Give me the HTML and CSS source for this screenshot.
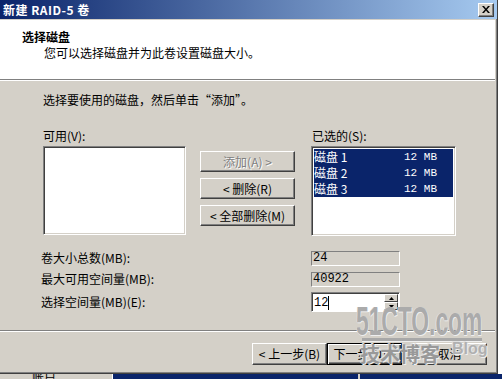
FILE: index.html
```html
<!DOCTYPE html>
<html lang="zh">
<head>
<meta charset="utf-8">
<link rel="stylesheet" href="styles.css">
</head>
<body>
<div class="screen">
  <div class="window">
    <div class="titlebar">
      <span class="title">新建 RAID-5 卷</span>
      <span class="close"><svg width="8" height="7" viewBox="0 0 8 7"><path d="M0 0h2l2 2.5L6 0h2L5 3.5 8 7H6L4 4.5 2 7H0l3-3.5z" fill="#000"/></svg></span>
    </div>
    <div class="header">
      <div class="h-title">选择磁盘</div>
      <div class="h-sub">您可以选择磁盘并为此卷设置磁盘大小。</div>
    </div>
    <div class="content">
      <div class="instr">选择要使用的磁盘，然后单击“添加”。</div>
      <div class="lists">
        <div class="col-left">
          <div class="label">可用(V):</div>
          <div class="listbox lb-left"></div>
        </div>
        <div class="col-mid">
          <div class="btn disabled">添加(A) &gt;</div>
          <div class="btn">&lt; 删除(R)</div>
          <div class="btn">&lt; 全部删除(M)</div>
        </div>
        <div class="col-right">
          <div class="label">已选的(S):</div>
          <div class="listbox lb-right">
            <div class="row"><span class="name">磁盘 1</span><span class="size">12 MB</span></div>
            <div class="row"><span class="name">磁盘 2</span><span class="size">12 MB</span></div>
            <div class="row"><span class="name">磁盘 3</span><span class="size">12 MB</span></div>
          </div>
        </div>
      </div>
      <div class="fields">
        <div class="frow"><span class="flabel">卷大小总数(MB):</span><span class="field ro">24</span></div>
        <div class="frow"><span class="flabel">最大可用空间量(MB):</span><span class="field ro">40922</span></div>
        <div class="frow"><span class="flabel">选择空间量(MB)(E):</span>
          <span class="spin"><span class="spin-val">12<span class="caret"></span></span>
            <span class="spin-btns"><span class="sb"><svg width="5" height="3" viewBox="0 0 5 3"><path d="M2.5 0L5 3H0z" fill="#000"/></svg></span><span class="sb"><svg width="5" height="3" viewBox="0 0 5 3"><path d="M0 0h5L2.5 3z" fill="#000"/></svg></span></span>
          </span>
        </div>
      </div>
    </div>
    <div class="footer">
      <div class="btn fb">&lt; 上一步(B)</div>
      <div class="btn fb default">下一步(N) &gt;</div>
      <div class="btn fb cancel">取消</div>
    </div>
    <div class="watermark">
      <div class="wm-big">51CTO.com</div>
      <div class="wm-line"></div>
      <div class="wm-small">技术博客<span class="wm-blog">Blog</span></div>
    </div>
  </div>
  <div class="taskbar">
    <div class="tb-left">账户</div>
    <div class="tb-right"><span class="tb-sep"></span></div>
  </div>
</div>
</body>
</html>
```
FILE: styles.css
```css
* { box-sizing: border-box; }
html, body { margin: 0; padding: 0; }
body {
  width: 502px; height: 379px; overflow: hidden;
  background: #ffffff;
  font-family: "Noto Sans CJK SC", "DejaVu Sans", sans-serif;
  font-size: 12px; color: #000;
}
.screen { position: relative; width: 502px; height: 379px; }
.window {
  position: relative;
  width: 498px; height: 374px;
  background: #d4d0c8;
  border-right: 1px solid #404040;
  border-bottom: 1px solid #404040;
  box-shadow: inset -1px -1px 0 #808080;
  display: flex; flex-direction: column;
}
.titlebar {
  height: 19px; flex: none;
  background: linear-gradient(to right, #0a246a, #a6caf0);
  display: flex; align-items: center; justify-content: space-between;
  padding: 0 3px 0 3px;
}
.title { color: #fff; font-weight: bold; font-size: 12px; line-height: 19px; letter-spacing: 0.5px; }
.close {
  width: 16px; height: 14px; background: #d4d0c8;
  border: 1px solid; border-color: #fff #404040 #404040 #fff;
  box-shadow: inset -1px -1px 0 #808080;
  display: flex; align-items: center; justify-content: center;
}
.header {
  height: 61px; flex: none; background: #fff;
  border-top: 1px solid #d4d0c8;
  border-bottom: 1px solid #808080;
  box-shadow: 0 1px 0 #fff;
  padding: 9px 0 0 22px;
  margin-right: 2px;
}
.h-title { font-weight: bold; line-height: 16px; }
.h-sub { line-height: 16px; padding-left: 22px; }
.content { padding: 11px 0 0 43px; height: 249px; flex: none; margin-top: 1px; margin-right: 2px; }
.instr { line-height: 16px; }
.lists { display: flex; margin-top: 20px; }
.label { line-height: 16px; height: 16px; margin-bottom: 2px; }
.listbox {
  background: #fff;
  border: 1px solid; border-color: #808080 #fff #fff #808080;
  box-shadow: inset 1px 1px 0 #404040, inset -1px -1px 0 #d4d0c8;
}
.lb-left { width: 143px; height: 89px; }
.col-mid { display: flex; flex-direction: column; gap: 6px; padding-top: 23px; margin-left: 14px; }
.btn {
  width: 95px; height: 21px;
  background: #d4d0c8;
  border: 1px solid; border-color: #fff #404040 #404040 #fff;
  box-shadow: inset -1px -1px 0 #808080;
  display: flex; align-items: center; justify-content: center;
  line-height: 16px; white-space: nowrap;
}
.btn.disabled { color: #808080; text-shadow: 1px 1px 0 #fff; }
.col-right { margin-left: 16px; }
.col-right .label { padding-left: 1px; }
.lb-right { width: 145px; height: 90px; padding: 2px 2px; }
.row { display: flex; height: 16px; line-height: 16px; background: #0a246a; color: #fff; }
.row .name { width: 90px; }
.row .size { font-family: "Liberation Mono", monospace; font-size: 11px; }
.fields { margin-top: 14px; margin-left: -2px; display: flex; flex-direction: column; gap: 5px; }
.frow { display: flex; align-items: center; height: 16px; }
.frow:last-child { height: 20px; }
.flabel { width: 270px; line-height: 16px; }
.field.ro {
  width: 89px; height: 15px; line-height: 13px;
  border: 1px solid; border-color: #808080 #fff #fff #808080;
  padding-left: 1px; font-family: "Liberation Mono", monospace; font-size: 12px;
}
.spin {
  width: 89px; height: 20px; display: flex; background: #fff;
  border: 1px solid; border-color: #808080 #fff #fff #808080;
  box-shadow: inset 1px 1px 0 #404040;
}
.spin-val { flex: 1; padding: 1px 0 0 2px; line-height: 16px; font-family: "Liberation Mono", monospace; display: flex; align-items: center; }
.caret { display: inline-block; width: 1px; height: 14px; background: #000; }
.spin-btns { display: flex; flex-direction: column; width: 15px; padding: 1px 1px 1px 0; }
.sb {
  flex: 1; background: #d4d0c8;
  border: 1px solid; border-color: #fff #404040 #404040 #fff;
  display: flex; align-items: center; justify-content: center;
}
.footer {
  border-top: 1px solid #808080; box-shadow: inset 0 1px 0 #fff;
  margin-right: 2px;
  flex: 1; display: flex; padding: 12px 0 0 252px;
}
.fb { width: 75px; height: 22px; }
.fb.default { border: 1px solid #000; box-shadow: inset 1px 1px 0 #fff, inset -1px -1px 0 #404040, inset -2px -2px 0 #808080; }
.fb.cancel { margin-left: 10px; }
.watermark {
  position: absolute; left: 356px; top: 303px; width: 134px;
  pointer-events: none;
}
.wm-big {
  font-family: "Liberation Sans", sans-serif; font-weight: bold; font-size: 40px; line-height: 36px;
  transform: scaleX(0.57); transform-origin: left; white-space: nowrap;
  color: #ababab; text-shadow: 1px 1px 0 #eeeeee, -1px 0 0 #e4e4e4;
}
.wm-line { height: 3px; background: #a8a8a8; margin: -1px 0 1px 6px; width: 120px; box-shadow: 0 1px 0 #eee; }
.wm-small {
  font-family: "Noto Sans CJK SC", sans-serif; font-weight: bold; font-size: 20px; line-height: 24px;
  color: #999999; padding-left: 4px; position: relative; white-space: nowrap;
  text-shadow: 1px 1px 0 #eeeeee, -1px -1px 0 #e0e0e0;
}
.wm-blog { position: absolute; left: 96px; top: -5px; font-family: "Liberation Sans", sans-serif; font-size: 16px; font-weight: bold; color: #b0b0b0; }
.taskbar { display: flex; height: 5px; }
.tb-left { width: 113px; background: #d4d0c8; border-right: 1px solid #fff; font-size: 12px; line-height: 5px; padding-left: 32px; overflow: hidden; }
.tb-right { flex: 1; background: #0a246a; position: relative; }
.tb-sep { position: absolute; left: 245px; top: 0; width: 2px; height: 5px; background: #d4d0c8; }
```
